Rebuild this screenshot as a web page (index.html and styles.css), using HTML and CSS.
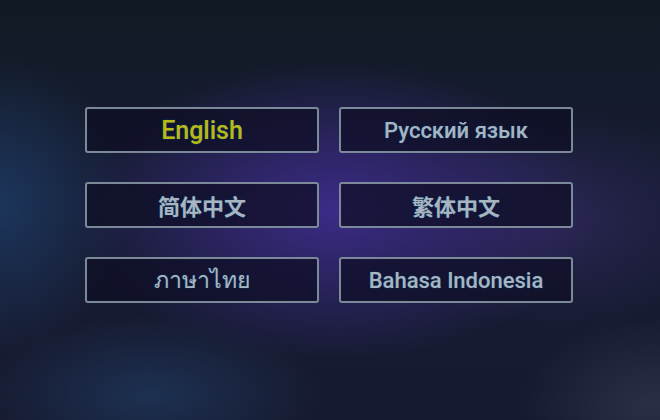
FILE: index.html
```html
<!DOCTYPE html>
<html lang="en">
<head>
  <meta charset="UTF-8">
  <meta name="viewport" content="width=device-width, initial-scale=1.0">
  <title>Language</title>
  <link rel="stylesheet" href="styles.css">
</head>
<body>
  <div class="screen">
    <div class="lang-grid">
      <button class="lang active">English</button>
      <button class="lang">Русский язык</button>
      <button class="lang cjk">简体中文</button>
      <button class="lang cjk" lang="zh-TW">繁体中文</button>
      <button class="lang" lang="th">ภาษาไทย</button>
      <button class="lang">Bahasa Indonesia</button>
    </div>
  </div>
</body>
</html>
```

FILE: styles.css
```css
html, body {
  margin: 0;
  padding: 0;
}
body {
  font-family: Roboto, "Noto Sans", "Noto Sans CJK SC", sans-serif;
  background: #151a2b;
}
.screen {
  width: 660px;
  height: 420px;
  overflow: hidden;
  background:
    radial-gradient(ellipse 260px 150px at 335px 210px, rgba(66, 46, 150, 0.85), rgba(66, 46, 150, 0) 100%),
    radial-gradient(ellipse 170px 110px at 560px 220px, rgba(55, 45, 105, 0.55), rgba(55, 45, 105, 0) 100%),
    radial-gradient(ellipse 130px 150px at 0px 205px, rgba(30, 62, 105, 0.75), rgba(30, 62, 105, 0) 100%),
    radial-gradient(ellipse 170px 80px at 150px 395px, rgba(32, 58, 95, 0.7), rgba(32, 58, 95, 0) 100%),
    radial-gradient(ellipse 130px 90px at 650px 405px, rgba(45, 50, 75, 0.85), rgba(45, 50, 75, 0) 100%),
    linear-gradient(180deg, #111a24 0%, #171c33 45%, #161a30 100%);
  padding-top: 107px;
  box-sizing: border-box;
}
.lang-grid {
  display: grid;
  grid-template-columns: 234px 234px;
  column-gap: 20px;
  row-gap: 29px;
  margin-left: 85px;
}
.lang {
  height: 46px;
  background: rgba(14, 14, 36, 0.72);
  border: 2px solid rgba(135, 150, 165, 0.9);
  border-radius: 3px;
  color: #a8b5c1;
  font-family: Roboto, "Noto Sans", "Noto Sans CJK SC", sans-serif;
  font-size: 22px;
  font-weight: 500;
  text-shadow: 0 0 1px #0f3358, 0 0 1px #0f3358, 0 0 2px #0f3358;
  padding: 0;
  cursor: pointer;
}
.lang.cjk {
  font-weight: 700;
}
.lang[lang="zh-TW"] {
  font-family: Roboto, "Noto Sans CJK TC", sans-serif;
}
.lang[lang="th"] {
  font-family: "Noto Sans", "DejaVu Sans", sans-serif;
  font-weight: 400;
  font-size: 23px;
}
.lang.active {
  color: #b9b915;
  font-size: 25px;
}
```
